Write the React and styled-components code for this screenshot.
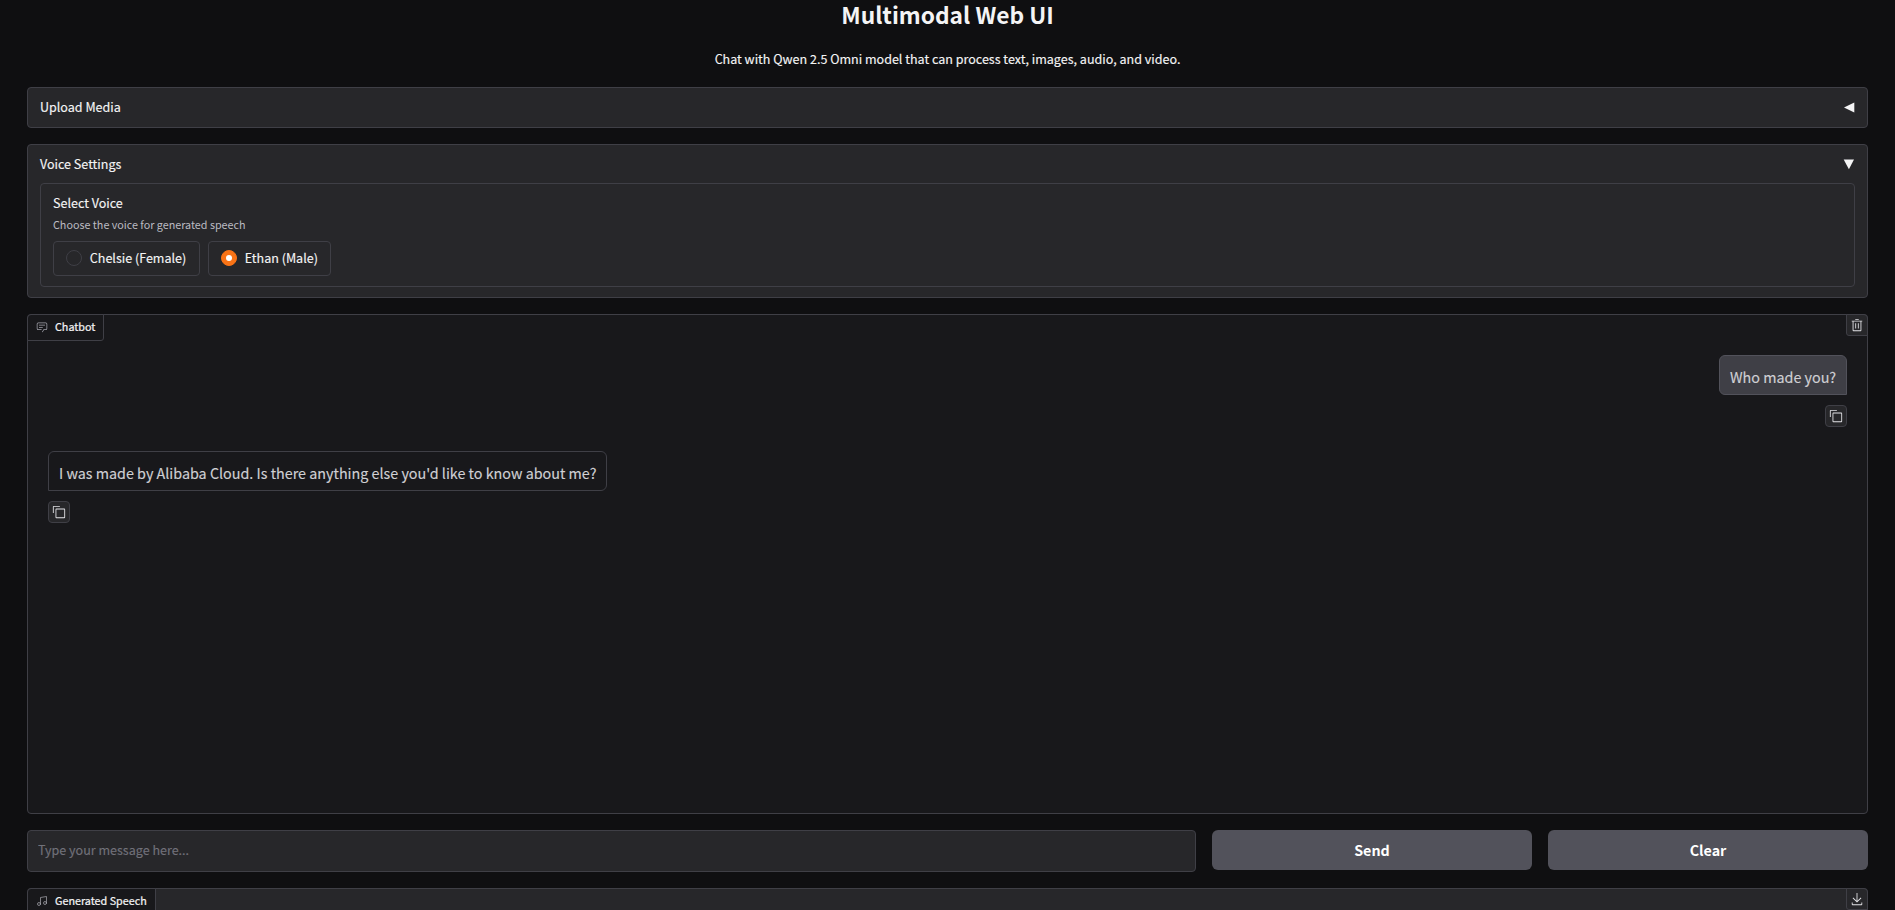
import React, { useState } from "react";
import styled, { createGlobalStyle, css } from "styled-components";

const GlobalStyle = createGlobalStyle`
  * { box-sizing: border-box; }
  html, body { margin: 0; background: #0f0f11; overflow: hidden; }
  body {
    color: #f4f4f5;
    font-family: "Source Sans Pro", "Noto Sans CJK SC", "Noto Sans", sans-serif;
    font-size: 12.54px;
    -webkit-text-stroke: 0.14px;
  }
  button, input { font-family: inherit; }
`;

const Page = styled.main`
  display: flex;
  flex-direction: column;
  gap: 16px;
  height: 910px;
  padding: 0 27px;
  overflow: hidden;
`;

const Header = styled.header`
  flex: none;
  height: 71px;
  text-align: center;
  white-space: nowrap;
`;

const Title = styled.h1`
  margin: 0;
  font-size: 22.75px;
  font-weight: 700;
  line-height: 30px;
  -webkit-text-stroke: 0;
`;

const Subtitle = styled.p`
  margin: 18px 0 0;
  line-height: 21px;
`;

const panel = css`
  flex: none;
  border: 1px solid #3f3f46;
  border-radius: 4px;
  background: #27272a;
`;

const Accordion = styled.section`
  ${panel}
  padding: 9px 12px;
  height: ${(p) => (p.$open ? 154 : 41)}px;
`;

const AccordionHeader = styled.div`
  display: flex;
  justify-content: space-between;
  align-items: center;
  height: 20px;
  line-height: 20px;
`;

const Arrow = styled.svg`
  display: block;
  width: 12px;
  height: 12px;
  margin-right: 0.5px;
  fill: #f4f4f5;
`;

const Fieldset = styled.div`
  ${panel}
  height: 104px;
  margin-top: 9px;
  padding: 9px 12px;
`;

const FieldTitle = styled.div`
  line-height: 20px;
`;

const FieldInfo = styled.div`
  margin-top: 3px;
  color: #bbbbc2;
  font-size: 10.75px;
  line-height: 18px;
  -webkit-text-stroke: 0;
`;

const Options = styled.div`
  display: flex;
  gap: 8px;
  margin-top: 7px;
`;

const Option = styled.label`
  display: flex;
  align-items: center;
  gap: 7.8px;
  width: ${(p) => p.$width}px;
  height: 35px;
  padding: 0 12px 1px;
  border: 1px solid #3f3f46;
  border-radius: 4px;
  line-height: 20px;
  white-space: nowrap;
`;

const RadioDot = styled.span`
  display: grid;
  place-items: center;
  flex: none;
  width: 16px;
  height: 16px;
  border: 1px solid ${(p) => (p.$on ? "#f97316" : "#3f3f46")};
  border-radius: 50%;
  background: ${(p) => (p.$on ? "#f97316" : "#27272a")};

  &::after {
    content: "";
    width: 6px;
    height: 6px;
    border-radius: 50%;
    background: ${(p) => (p.$on ? "#fff" : "transparent")};
  }
`;

const ChatPanel = styled.section`
  ${panel}
  height: 500px;
  background: #18181b;
`;

const PanelBar = styled.div`
  display: flex;
  justify-content: space-between;
  align-items: flex-start;
  height: 27px;
  margin: -1px;
`;

const PanelLabel = styled.div`
  display: flex;
  align-items: center;
  width: ${(p) => p.$width}px;
  height: 27px;
  padding: 0 0 2px 8px;
  border: 1px solid #3f3f46;
  border-radius: 4px 0 3px 0;
  background: #18181b;
  font-size: 10.78px;
  line-height: 15px;
  gap: 7px;
  white-space: nowrap;
  -webkit-text-stroke: 0.22px;
`;

const LabelIcon = styled.svg`
  display: block;
  width: 12px;
  height: 12px;
  margin-top: 1px;
  margin-left: -0.5px;
  margin-right: 0.5px;
  color: #a1a1aa;
`;

const IconButton = styled.button`
  display: grid;
  place-items: center;
  width: 22px;
  height: 22px;
  padding: 0;
  border: 1px solid #3f3f46;
  border-radius: ${(p) => (p.$corner ? "0 4px 0 3px" : "4px")};
  background: #27272a;
  color: #e4e4e7;

  svg { display: block; width: 14px; height: 14px; }
`;

const Messages = styled.div`
  display: flex;
  flex-direction: column;
  gap: 24px;
  padding: 15px 20px;
`;

const Message = styled.div`
  display: flex;
  flex-direction: column;
  gap: 10px;
  align-items: ${(p) => (p.$user ? "flex-end" : "flex-start")};
`;

const Bubble = styled.div`
  width: ${(p) => (p.$user ? 128 : 559)}px;
  height: 40px;
  padding: 10px 0 0 10px;
  border: 1px solid ${(p) => (p.$user ? "#52525b" : "#3f3f46")};
  border-radius: ${(p) => (p.$user ? "6px 6px 0 6px" : "6px 6px 6px 0")};
  background: ${(p) => (p.$user ? "#3f3f46" : "#18181b")};
  color: #d0d0d4;
  font-size: 14.34px;
  line-height: 22px;
  white-space: nowrap;
`;

const Composer = styled.div`
  display: flex;
  align-items: flex-start;
  flex: none;
  gap: 16px;
  height: 42px;
`;

const MessageInput = styled.input`
  ${panel}
  width: 1169px;
  height: 42px;
  padding: 0 10px 4px;
  color: #f4f4f5;
  font-size: 12.54px;
  outline: none;

  &::placeholder { color: #71717a; opacity: 1; }
`;

const ActionButton = styled.button`
  flex: 1;
  height: 40px;
  padding: 0;
  border: 0;
  border-radius: 6px;
  background: #52525b;
  color: #fff;
  font-size: 14.3px;
  font-weight: 700;
  line-height: 24px;
  -webkit-text-stroke: 0;
`;

const AudioPanel = styled.section`
  ${panel}
  height: 100px;
`;

const CopyIcon = () => (
  <svg viewBox="0 0 32 32" fill="currentColor">
    <path d="M28 10v18H10V10h18m0-2H10a2 2 0 0 0-2 2v18a2 2 0 0 0 2 2h18a2 2 0 0 0 2-2V10a2 2 0 0 0-2-2Z" />
    <path d="M4 18H2V4a2 2 0 0 1 2-2h14v2H4Z" />
  </svg>
);

const TrashIcon = () => (
  <svg viewBox="0 0 32 32" fill="currentColor">
    <path d="M12 12h2v12h-2zm6 0h2v12h-2z" />
    <path d="M4 6v2h2v20a2 2 0 0 0 2 2h16a2 2 0 0 0 2-2V8h2V6zm4 22V8h16v20zm4-26h8v2h-8z" />
  </svg>
);

const DownloadIcon = () => (
  <svg viewBox="0 0 32 32" fill="currentColor">
    <path d="M26 24v4H6v-4H4v4a2 2 0 0 0 2 2h20a2 2 0 0 0 2-2v-4zm0-10l-1.41-1.41L17 20.17V2h-2v18.17l-7.59-7.58L6 14l10 10l10-10z" />
  </svg>
);

const ChatIcon = () => (
  <LabelIcon viewBox="0 0 32 32" fill="currentColor">
    <path d="M17.74 30L16 29l4-7h6a2 2 0 0 0 2-2V8a2 2 0 0 0-2-2H6a2 2 0 0 0-2 2v12a2 2 0 0 0 2 2h9v2H6a4 4 0 0 1-4-4V8a4 4 0 0 1 4-4h20a4 4 0 0 1 4 4v12a4 4 0 0 1-4 4h-4.84Z" />
    <path d="M8 10h16v2H8zm0 6h10v2H8z" />
  </LabelIcon>
);

const MusicIcon = () => (
  <LabelIcon viewBox="0 0 24 24" fill="none" stroke="currentColor" strokeWidth="1.5" strokeLinecap="round" strokeLinejoin="round">
    <path d="M9 18V5l12-2v13" />
    <circle cx="6" cy="18" r="3" />
    <circle cx="18" cy="16" r="3" />
  </LabelIcon>
);

const voices = [
  { name: "Chelsie (Female)", width: 147 },
  { name: "Ethan (Male)", width: 123 },
];

const messages = [
  { user: true, text: "Who made you?" },
  { user: false, text: "I was made by Alibaba Cloud. Is there anything else you'd like to know about me?" },
];

export default function App() {
  const [voice, setVoice] = useState("Ethan (Male)");
  return (
    <>
      <GlobalStyle />
      <Page>
        <Header>
          <Title>Multimodal Web UI</Title>
          <Subtitle>Chat with Qwen 2.5 Omni model that can process text, images, audio, and video.</Subtitle>
        </Header>
        <Accordion>
          <AccordionHeader>
            <span>Upload Media</span>
            <Arrow viewBox="0 0 12 12"><path d="M1 6.5L11.3 1.5v10z" /></Arrow>
          </AccordionHeader>
        </Accordion>
        <Accordion $open>
          <AccordionHeader>
            <span>Voice Settings</span>
            <Arrow viewBox="0 0 12 12"><path d="M.7 1.5H11L5.9 11.3z" /></Arrow>
          </AccordionHeader>
          <Fieldset>
            <FieldTitle>Select Voice</FieldTitle>
            <FieldInfo>Choose the voice for generated speech</FieldInfo>
            <Options>
              {voices.map((v) => (
                <Option key={v.name} $width={v.width} onClick={() => setVoice(v.name)}>
                  <RadioDot $on={voice === v.name} />
                  {v.name}
                </Option>
              ))}
            </Options>
          </Fieldset>
        </Accordion>
        <ChatPanel>
          <PanelBar>
            <PanelLabel $width={77}><ChatIcon />Chatbot</PanelLabel>
            <IconButton $corner aria-label="Clear chat"><TrashIcon /></IconButton>
          </PanelBar>
          <Messages>
            {messages.map((m) => (
              <Message key={m.text} $user={m.user}>
                <Bubble $user={m.user}>{m.text}</Bubble>
                <IconButton aria-label="Copy message"><CopyIcon /></IconButton>
              </Message>
            ))}
          </Messages>
        </ChatPanel>
        <Composer>
          <MessageInput placeholder="Type your message here..." />
          <ActionButton>Send</ActionButton>
          <ActionButton>Clear</ActionButton>
        </Composer>
        <AudioPanel>
          <PanelBar>
            <PanelLabel $width={129}><MusicIcon />Generated Speech</PanelLabel>
            <IconButton $corner aria-label="Download audio"><DownloadIcon /></IconButton>
          </PanelBar>
        </AudioPanel>
      </Page>
    </>
  );
}
